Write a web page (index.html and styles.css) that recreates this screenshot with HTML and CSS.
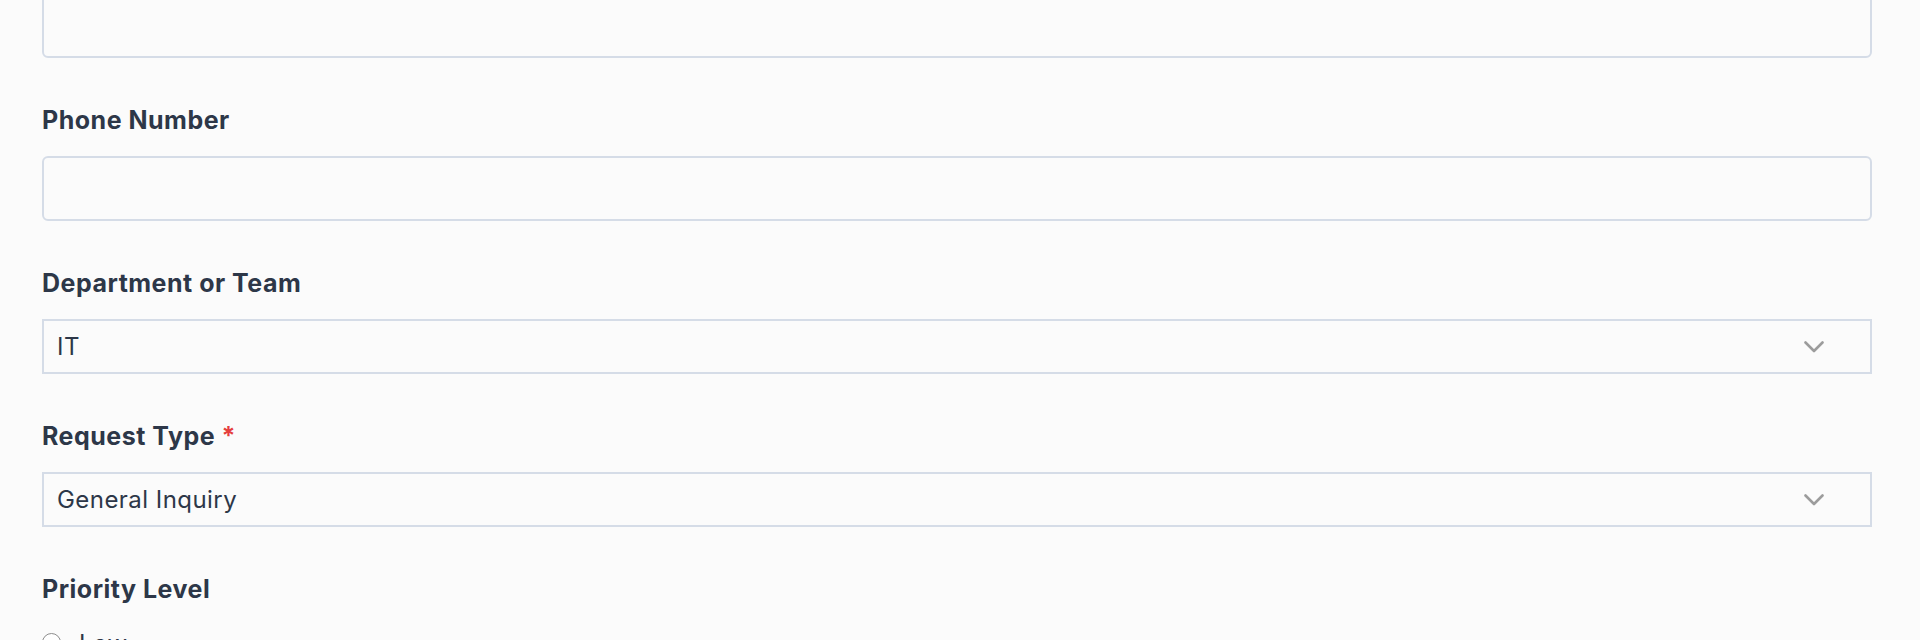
FILE: index.html
```html
<!DOCTYPE html>
<html lang="en">
<head>
<meta charset="utf-8">
<title>Request Form</title>
<link rel="stylesheet" href="styles.css">
</head>
<body>
<form class="form">
  <div class="field field-first">
    <textarea class="text-input text-input-tall" aria-label="Details"></textarea>
  </div>

  <div class="field">
    <label class="label" for="phone">Phone Number</label>
    <input class="text-input" id="phone" type="tel">
  </div>

  <div class="field">
    <label class="label" for="dept">Department or Team</label>
    <div class="select-wrap">
      <select class="select" id="dept">
        <option>IT</option>
        <option>HR</option>
        <option>Finance</option>
      </select>
      <svg class="chevron" viewBox="0 0 20 12" width="20" height="12" aria-hidden="true"><path d="M1.5 1.5 L10 10 L18.5 1.5" fill="none" stroke="#9c9c9c" stroke-width="2.6" stroke-linecap="round" stroke-linejoin="round"/></svg>
    </div>
  </div>

  <div class="field">
    <label class="label" for="type">Request Type <span class="req">*</span></label>
    <div class="select-wrap">
      <select class="select" id="type">
        <option>General Inquiry</option>
        <option>Support</option>
      </select>
      <svg class="chevron" viewBox="0 0 20 12" width="20" height="12" aria-hidden="true"><path d="M1.5 1.5 L10 10 L18.5 1.5" fill="none" stroke="#9c9c9c" stroke-width="2.6" stroke-linecap="round" stroke-linejoin="round"/></svg>
    </div>
  </div>

  <div class="field">
    <span class="label">Priority Level</span>
    <div class="radio-group">
      <label class="radio-row"><input class="radio" type="radio" name="priority"><span>Low</span></label>
      <label class="radio-row"><input class="radio" type="radio" name="priority"><span>Medium</span></label>
      <label class="radio-row"><input class="radio" type="radio" name="priority"><span>High</span></label>
    </div>
  </div>
</form>
</body>
</html>
```

FILE: styles.css
```css
* { box-sizing: border-box; }

html, body {
  margin: 0;
  padding: 0;
  background: #fbfbfb;
  overflow: hidden;
}

body {
  font-family: Inter, "Liberation Sans", Arial, sans-serif;
  color: #2d3748;
}

.form {
  width: 1830px;
  margin: 0 0 0 42px;
  display: flex;
  flex-direction: column;
  gap: 44px;
}

.field {
  display: flex;
  flex-direction: column;
}

.field-first {
  margin-top: -7px;
}

.label {
  display: block;
  font-size: 25px;
  line-height: 36px;
  font-weight: 700;
  letter-spacing: 0.5px;
  color: #2d3748;
  margin-bottom: 18px;
}

.req {
  color: #e53e3e;
}

.text-input {
  display: block;
  width: 100%;
  height: 65px;
  border: 2px solid #d5dce7;
  border-radius: 6px;
  background: #fbfbfb;
  padding: 0 16px;
  font: inherit;
  font-size: 24px;
  color: #2d3748;
  outline: none;
  resize: none;
}

.select-wrap {
  position: relative;
}

.select {
  display: block;
  width: 100%;
  height: 55px;
  border: 2px solid #d5dce7;
  border-radius: 0;
  background: #fbfbfb;
  padding: 0 50px 0 13px;
  font-family: inherit;
  font-size: 24px;
  letter-spacing: 0.45px;
  color: #2d3748;
  -webkit-appearance: none;
  appearance: none;
  outline: none;
}

.chevron {
  position: absolute;
  right: 48px;
  top: 22px;
}

.radio-group {
  display: flex;
  flex-direction: column;
  gap: 12px;
  margin-top: 1px;
}

.radio-row {
  display: flex;
  align-items: center;
  gap: 18px;
  font-size: 24px;
  letter-spacing: 0.45px;
  line-height: 36px;
  color: #2d3748;
}

.radio {
  -webkit-appearance: none;
  appearance: none;
  margin: 0;
  width: 19px;
  height: 19px;
  border: 1.5px solid #8d8d8d;
  border-radius: 50%;
  background: #fff;
  flex: none;
  position: relative;
  top: -2px;
}
```
